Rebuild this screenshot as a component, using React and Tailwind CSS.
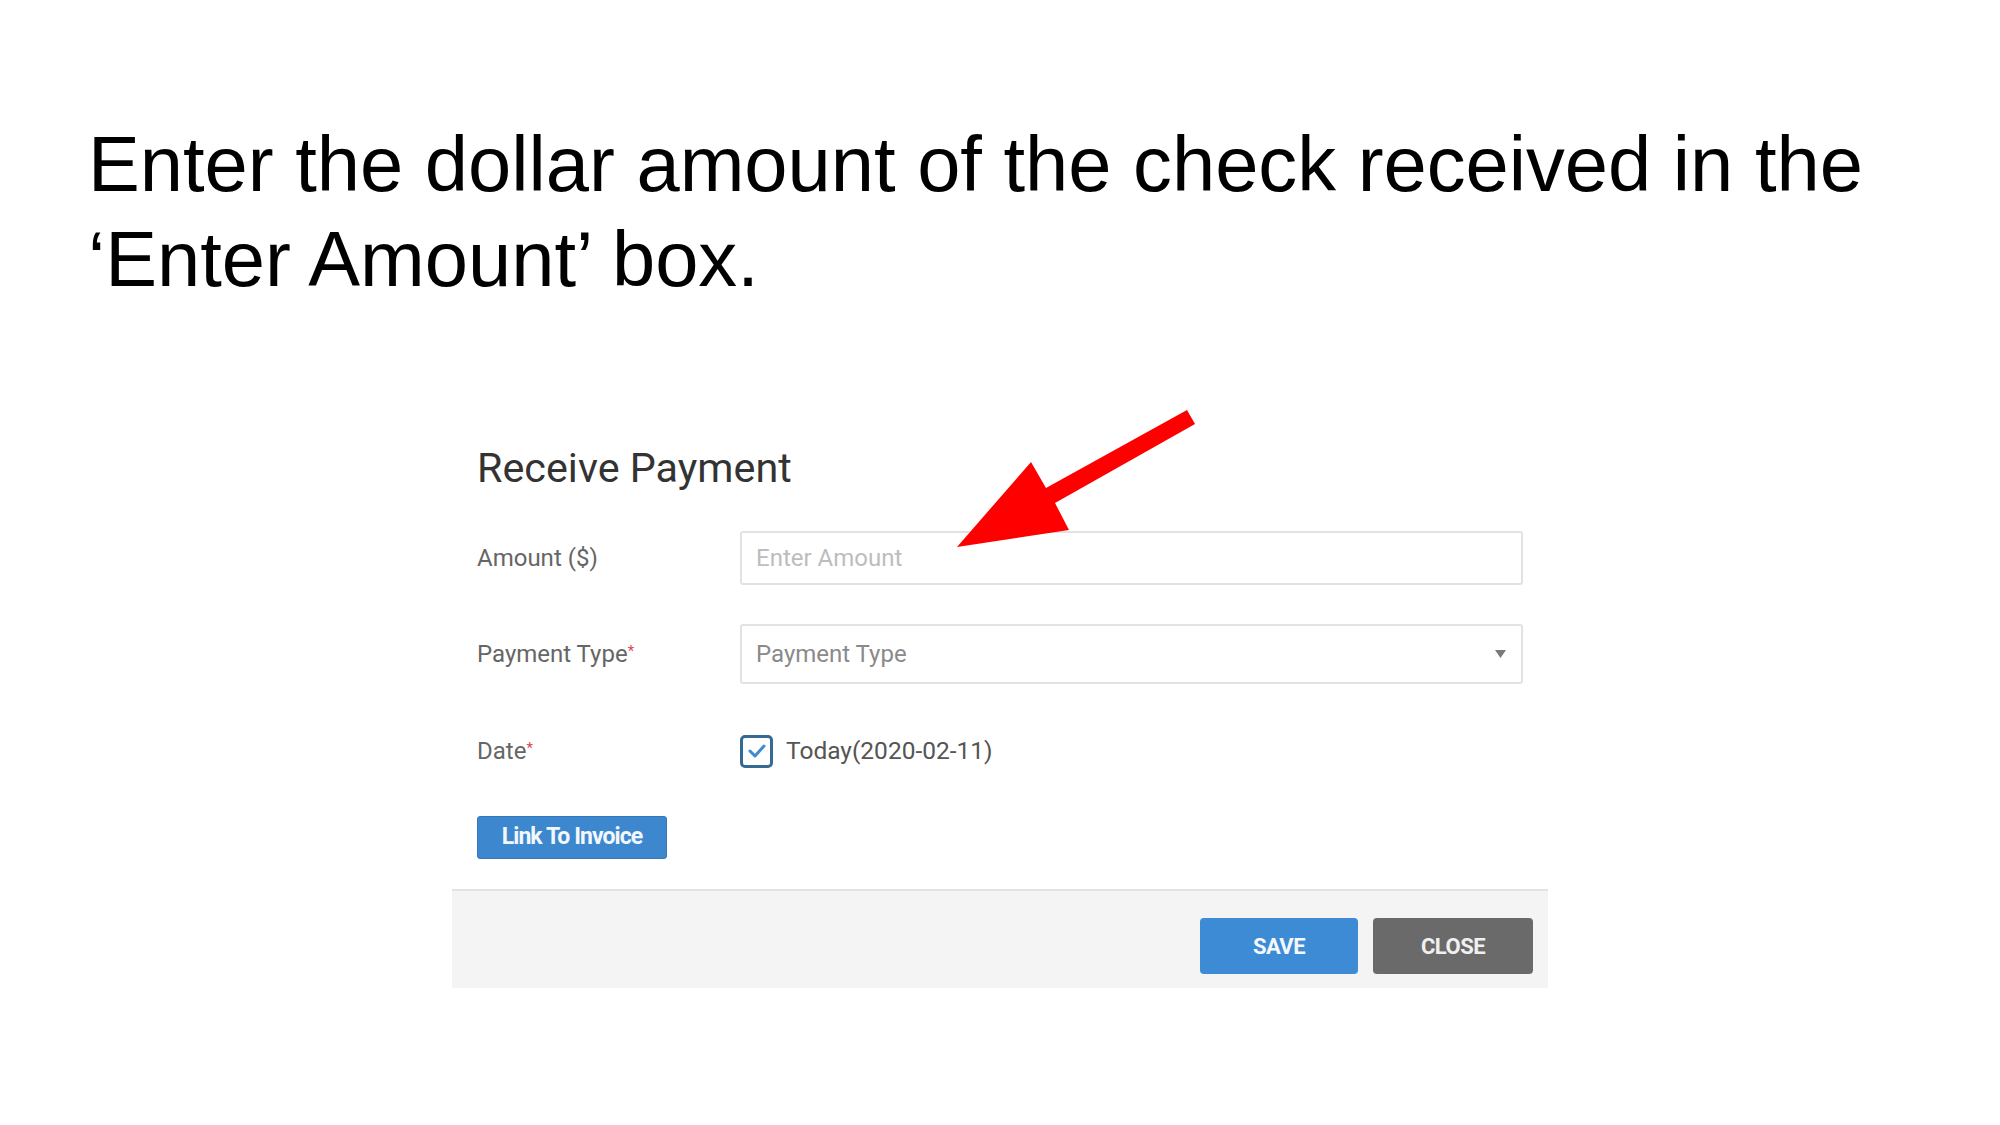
import React from "react";

function Arrow() {
  return (
    <svg
      className="pointer-events-none absolute left-0 top-0"
      width="2000"
      height="1125"
      viewBox="0 0 2000 1125"
    >
      <polygon
        points="1187,410 1195,424 1055,503 1069,530 957,547 1031,462 1046,488"
        fill="#ff0000"
      />
    </svg>
  );
}

function FieldRow({ label, required, children, className = "" }) {
  return (
    <div className={`flex items-center ${className}`}>
      <div className="w-[263px] shrink-0 text-[24px] leading-none text-[#666]">
        {label}
        {required && (
          <span className="relative -top-[6px] text-[15px] text-[#e04848]">*</span>
        )}
      </div>
      <div className="flex flex-1 items-center">{children}</div>
    </div>
  );
}

function ReceivePayment() {
  return (
    <div className="ml-[452px] mt-[113px] w-[1096px] bg-white font-['Roboto',sans-serif]">
      <div className="px-[25px] pt-[24px] pb-[30px]">
        <h2 className="text-[41.3px] leading-[48px] text-[#333]">Receive Payment</h2>

        <FieldRow label="Amount ($)" className="mt-[39px]">
          <input
            type="text"
            placeholder="Enter Amount"
            className="h-[54px] w-full rounded-[3px] border-2 border-[#e2e2e2] px-[14px] text-[24px] text-[#444] outline-none placeholder:text-[#bdbdbd]"
          />
        </FieldRow>

        <FieldRow label="Payment Type" required className="mt-[39px]">
          <div className="flex h-[60px] w-full items-center justify-between rounded-[3px] border-2 border-[#e2e2e2] pl-[14px] pr-[15px]">
            <span className="text-[24px] text-[#8a8a8a]">Payment Type</span>
            <svg width="11" height="8" viewBox="0 0 11 8">
              <polygon points="0,0 11,0 5.5,8" fill="#7a7a7a" />
            </svg>
          </div>
        </FieldRow>

        <FieldRow label="Date" required className="mt-[40px] h-[54px]">
          <div className="flex h-[33px] w-[33px] items-center justify-center rounded-[5px] border-[3px] border-[#356a92] bg-white">
            <svg width="20" height="16" viewBox="0 0 20 16">
              <polyline
                points="3,8 8,13 17,3"
                fill="none"
                stroke="#3f8bcc"
                strokeWidth="3"
                strokeLinecap="round"
                strokeLinejoin="round"
              />
            </svg>
          </div>
          <span className="ml-[13px] text-[24.5px] text-[#555]">Today(2020-02-11)</span>
        </FieldRow>

        <button className="mt-[38px] h-[43px] w-[190px] rounded-[3px] border border-[#3479bd] bg-[#3d87cf] text-[23px] font-bold tracking-[-0.04em] text-[#f2f7fc]">
          Link To Invoice
        </button>
      </div>

      <div className="flex justify-end gap-[15px] border-t-2 border-[#e3e3e3] bg-[#f4f4f4] pt-[27px] pr-[15px] pb-[14px]">
        <button className="h-[56px] w-[158px] rounded-[4px] bg-[#3d8ad5] text-[22px] font-bold tracking-tight text-[#f4f8fc]">
          SAVE
        </button>
        <button className="h-[56px] w-[160px] rounded-[4px] bg-[#6a6a6a] text-[22px] font-bold tracking-tight text-[#f0f0f0]">
          CLOSE
        </button>
      </div>
    </div>
  );
}

export default function App() {
  return (
    <div className="relative min-h-[1125px] w-[2000px] overflow-hidden bg-white">
      <h1 className="pl-[88px] pt-[117px] font-['Liberation_Sans',Arial,sans-serif] text-[77.7px] leading-[95px] text-black">
        Enter the dollar amount of the check received in the
        <br />
        ‘Enter Amount’ box.
      </h1>
      <ReceivePayment />
      <Arrow />
    </div>
  );
}
